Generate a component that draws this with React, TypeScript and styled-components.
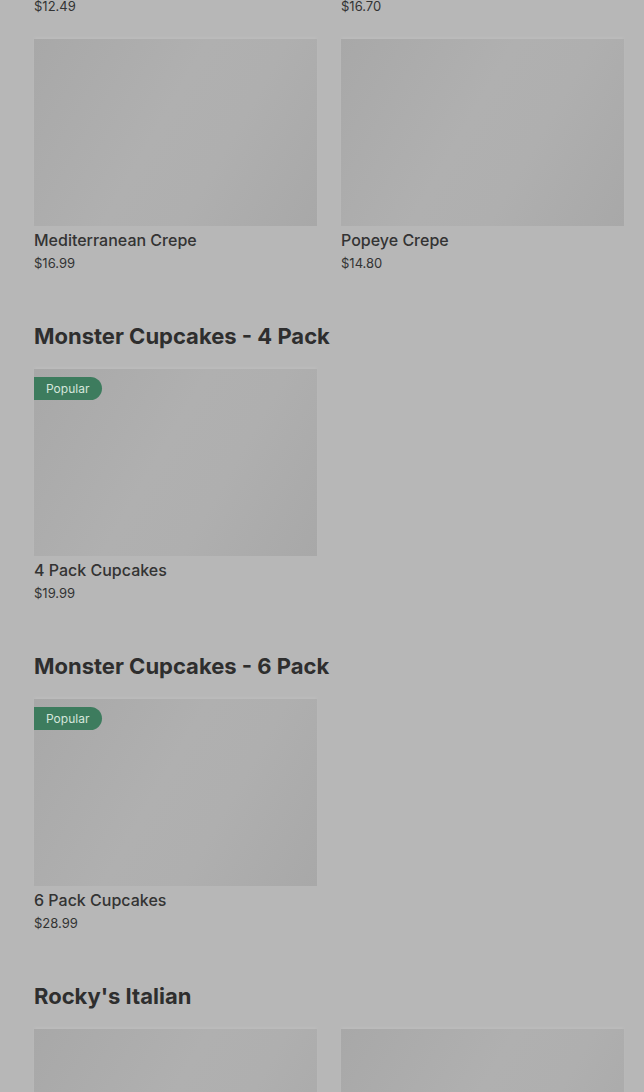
import React from 'react';
import styled, { createGlobalStyle } from 'styled-components';

const GlobalStyle = createGlobalStyle`
  html, body {
    margin: 0;
    padding: 0;
    background: #b7b7b7;
    overflow: hidden;
  }
  body {
    font-family: Inter, "Liberation Sans", sans-serif;
    color: #2f2f2f;
  }
`;

const Page = styled.div`
  width: 644px;
  height: 1092px;
  overflow: hidden;
  background: #b7b7b7;
`;

// the menu is scrolled part way down the crepes section
const Scroll = styled.div`
  margin-top: -265px;
  padding: 0 20px 0 34px;
`;

const Section = styled.section`
  padding-bottom: 50px;
`;

const Heading = styled.h2`
  margin: 0 0 19px;
  font-size: 22px;
  line-height: 28px;
  font-weight: 700;
  color: #2e2e2e;
`;

const Grid = styled.div`
  display: grid;
  grid-template-columns: 283px 283px;
  column-gap: 24px;
  row-gap: 24px;
`;

const Card = styled.div`
  display: flex;
  flex-direction: column;
`;

const Image = styled.div`
  position: relative;
  height: 187px;
  background: linear-gradient(120deg, #a8a8a8 0%, #b0b0b0 45%, #afafaf 65%, #a8a8a8 100%);
  box-shadow: 0 -2px 3px rgba(255, 255, 255, 0.08);
`;

const Badge = styled.span`
  position: absolute;
  top: 8px;
  left: 0;
  height: 23px;
  padding: 0 13px 0 12px;
  display: flex;
  align-items: center;
  background: #3d7c5e;
  color: #d6e6dc;
  font-size: 12px;
  border-radius: 0 12px 12px 0;
`;

const Name = styled.div`
  margin-top: 4px;
  font-size: 16px;
  line-height: 20px;
  font-weight: 500;
  color: #333;
`;

const Price = styled.div`
  margin-top: 4px;
  font-size: 13px;
  line-height: 18px;
  color: #333;
`;

type Item = { name: string; price: string; popular?: boolean };

const sections: { title: string; items: Item[] }[] = [
  {
    title: 'Crepes',
    items: [
      { name: 'Nutella Crepe', price: '$12.49' },
      { name: 'Strawberry Crepe', price: '$16.70' },
      { name: 'Mediterranean Crepe', price: '$16.99' },
      { name: 'Popeye Crepe', price: '$14.80' },
    ],
  },
  {
    title: 'Monster Cupcakes - 4 Pack',
    items: [{ name: '4 Pack Cupcakes', price: '$19.99', popular: true }],
  },
  {
    title: 'Monster Cupcakes - 6 Pack',
    items: [{ name: '6 Pack Cupcakes', price: '$28.99', popular: true }],
  },
  {
    title: "Rocky's Italian",
    items: [
      { name: 'Italian Sub', price: '$13.99' },
      { name: 'Meatball Sub', price: '$12.99' },
    ],
  },
];

function MenuCard({ item }: { item: Item }) {
  return (
    <Card>
      <Image>{item.popular && <Badge>Popular</Badge>}</Image>
      <Name>{item.name}</Name>
      <Price>{item.price}</Price>
    </Card>
  );
}

export default function App() {
  return (
    <Page>
      <GlobalStyle />
      <Scroll>
        {sections.map((s) => (
          <Section key={s.title}>
            <Heading>{s.title}</Heading>
            <Grid>
              {s.items.map((it) => (
                <MenuCard key={it.name} item={it} />
              ))}
            </Grid>
          </Section>
        ))}
      </Scroll>
    </Page>
  );
}
